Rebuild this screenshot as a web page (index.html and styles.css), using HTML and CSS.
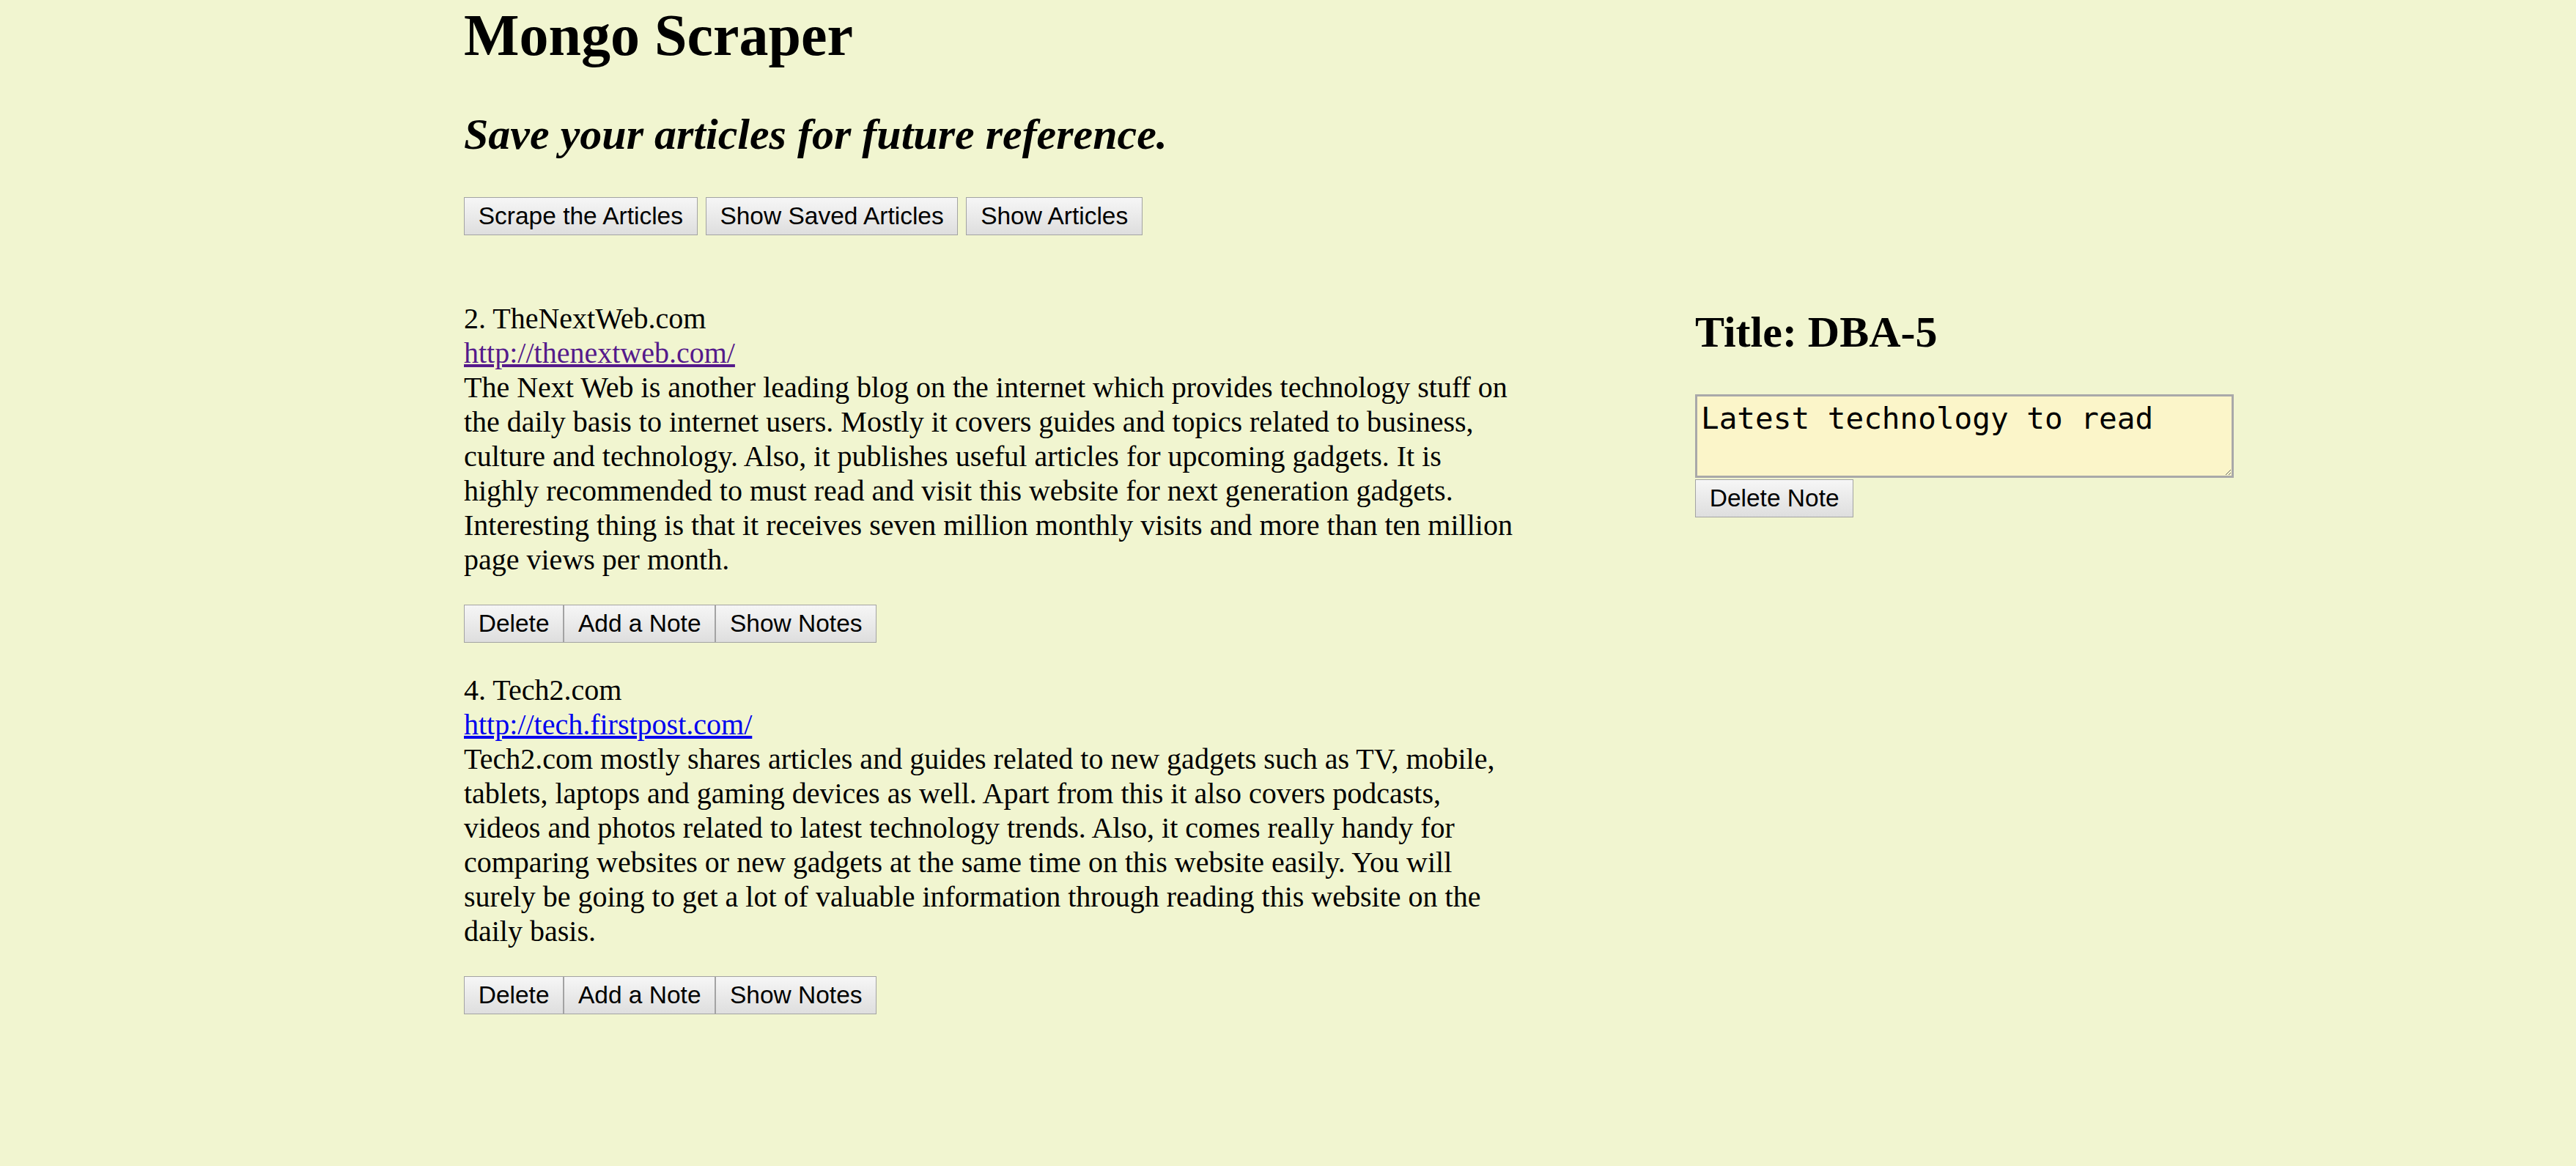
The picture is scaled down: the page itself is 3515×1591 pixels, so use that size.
FILE: index.html
```html
<!DOCTYPE html>
<html lang="en">
<head>
<meta charset="utf-8">
<title>Mongo Scraper</title>
<link rel="stylesheet" href="styles.css">
</head>
<body>
<div class="container">
  <h1 class="title">Mongo Scraper</h1>
  <h2 class="subtitle">Save your articles for future reference.</h2>
  <div class="toolbar">
    <button class="btn">Scrape the Articles</button>
    <button class="btn">Show Saved Articles</button>
    <button class="btn">Show Articles</button>
  </div>
  <div class="main">
    <div class="articles">
      <div class="article">
        <div class="article-title">2. TheNextWeb.com</div>
        <div class="article-link"><a class="link visited" href="#">http://thenextweb.com/</a></div>
        <p class="article-text">The Next Web is another leading blog on the internet which provides technology stuff on the daily basis to internet users. Mostly it covers guides and topics related to business, culture and technology. Also, it publishes useful articles for upcoming gadgets. It is highly recommended to must read and visit this website for next generation gadgets. Interesting thing is that it receives seven million monthly visits and more than ten million page views per month.</p>
        <div class="actions">
          <button class="btn">Delete</button><button class="btn">Add a Note</button><button class="btn">Show Notes</button>
        </div>
      </div>
      <div class="article">
        <div class="article-title">4. Tech2.com</div>
        <div class="article-link"><a class="link" href="#">http://tech.firstpost.com/</a></div>
        <p class="article-text">Tech2.com mostly shares articles and guides related to new gadgets such as TV, mobile, tablets, laptops and gaming devices as well. Apart from this it also covers podcasts, videos and photos related to latest technology trends. Also, it comes really handy for comparing websites or new gadgets at the same time on this website easily. You will surely be going to get a lot of valuable information through reading this website on the daily basis.</p>
        <div class="actions">
          <button class="btn">Delete</button><button class="btn">Add a Note</button><button class="btn">Show Notes</button>
        </div>
      </div>
    </div>
    <div class="notes">
      <h2 class="note-title">Title: DBA-5</h2>
      <textarea class="note-body">Latest technology to read</textarea>
      <button class="btn">Delete Note</button>
    </div>
  </div>
</div>
</body>
</html>
```

FILE: styles.css
```css
html, body {
  margin: 0;
  padding: 0;
}

body {
  background: #f1f5d0;
  color: #000;
  font-family: "Liberation Serif", "Times New Roman", serif;
  font-size: 40px;
}

.container {
  margin-left: 633px;
  padding-top: 3px;
}

.title {
  font-size: 80px;
  font-weight: bold;
  margin: 0;
}

.subtitle {
  font-size: 60px;
  font-style: italic;
  font-weight: bold;
  margin: 55px 0 51px;
}

.toolbar {
  display: flex;
  gap: 11px;
}

.btn {
  font-family: "Liberation Sans", Arial, sans-serif;
  font-size: 33.5px;
  line-height: 40px;
  padding: 5px 18.7px;
  border: 1px solid #a3a3a3;
  border-radius: 0;
  background: linear-gradient(#f6f6f6, #dedede);
  color: #000;
  margin: 0;
  cursor: pointer;
}

.main {
  display: grid;
  grid-template-columns: 1437px 735px;
  column-gap: 243px;
  margin-top: 90px;
}

.article-title,
.article-link,
.article-text {
  margin: 0;
}

.link {
  color: #0000ee;
  text-decoration: underline;
}

.link.visited {
  color: #551a8b;
}

.actions {
  display: flex;
  margin: 38px 0 41px;
}

.notes {
  padding-top: 8px;
}

.note-title {
  font-size: 60px;
  font-weight: bold;
  margin: 0 0 50px;
}

.note-body {
  display: block;
  box-sizing: border-box;
  width: 735px;
  height: 114px;
  border: 3px solid #a9a9a9;
  background: #fbf5c9;
  font-family: "DejaVu Sans Mono", monospace;
  font-size: 41px;
  line-height: normal;
  padding: 6px 5px;
  margin: 0 0 2px;
  color: #000;
}
```
